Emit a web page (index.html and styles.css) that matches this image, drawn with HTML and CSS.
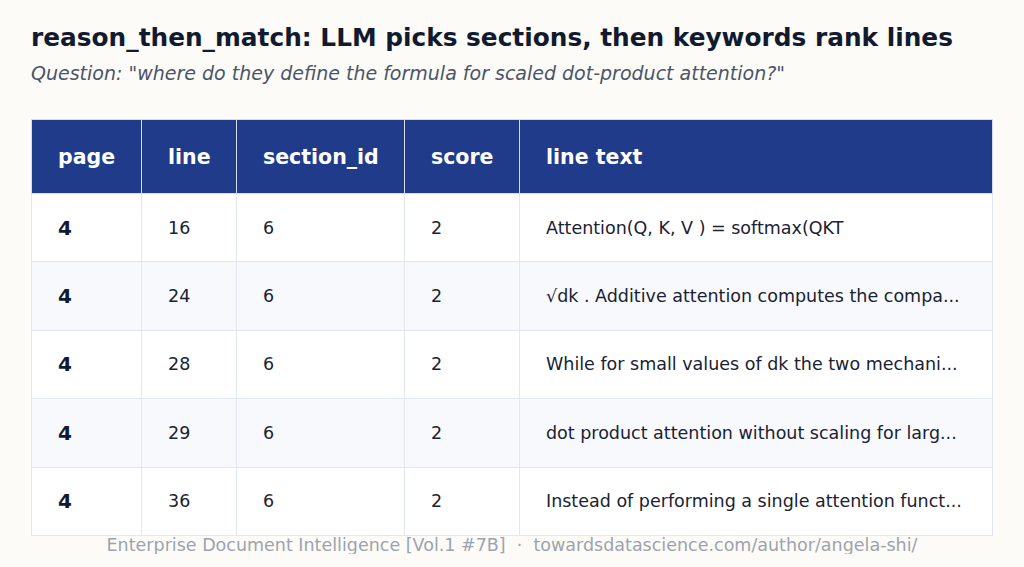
FILE: index.html
```html
<!DOCTYPE html>
<html>
<head>
<meta charset="utf-8">
<link rel="stylesheet" href="styles.css">
</head>
<body>
<div class="page">
  <h1 class="title">reason_then_match: LLM picks sections, then keywords rank lines</h1>
  <p class="subtitle">Question: "where do they define the formula for scaled dot-product attention?"</p>
  <table class="results">
    <colgroup>
      <col class="c-page"><col class="c-line"><col class="c-sec"><col class="c-score"><col class="c-text">
    </colgroup>
    <thead>
      <tr><th>page</th><th>line</th><th>section_id</th><th>score</th><th>line text</th></tr>
    </thead>
    <tbody>
      <tr><td class="pg">4</td><td>16</td><td>6</td><td>2</td><td>Attention(Q, K, V ) = softmax(QKT</td></tr>
      <tr><td class="pg">4</td><td>24</td><td>6</td><td>2</td><td>√dk . Additive attention computes the compa...</td></tr>
      <tr><td class="pg">4</td><td>28</td><td>6</td><td>2</td><td>While for small values of dk the two mechani...</td></tr>
      <tr><td class="pg">4</td><td>29</td><td>6</td><td>2</td><td>dot product attention without scaling for larg...</td></tr>
      <tr><td class="pg">4</td><td>36</td><td>6</td><td>2</td><td>Instead of performing a single attention funct...</td></tr>
    </tbody>
  </table>
  <p class="footer">Enterprise Document Intelligence [Vol.1 #7B] &nbsp;·&nbsp; towardsdatascience.com/author/angela-shi/</p>
</div>
</body>
</html>
```
FILE: styles.css
```css
html, body {
  margin: 0;
  padding: 0;
  background: #fcfbf7;
}
body {
  font-family: "DejaVu Sans", "Liberation Sans", sans-serif;
  color: #111827;
}
.page {
  padding: 22px 31px 0 31px;
}
.title {
  margin: 0;
  font-size: 24.8px;
  font-weight: bold;
  line-height: 32px;
  color: #111a2e;
}
.subtitle {
  margin: 7px 0 0 0;
  font-size: 19px;
  font-style: italic;
  line-height: 24px;
  color: #4a5568;
}
.results {
  margin-top: 34px;
  width: 961px;
  border-collapse: collapse;
  table-layout: fixed;
  background: #ffffff;
}
.c-page { width: 110px; }
.c-line { width: 95px; }
.c-sec { width: 168px; }
.c-score { width: 115px; }
.c-text { width: 473px; }
.results th {
  background: #1f3b8a;
  color: #ffffff;
  font-size: 20.5px;
  font-weight: bold;
  text-align: left;
  height: 73px;
  padding: 0 0 0 26px;
  border: 1px solid #d5dcea;
}
.results td {
  height: 67.4px;
  padding: 0 0 0 26px;
  font-size: 17.5px;
  color: #1a2233;
  border: 1px solid #e3e8f0;
  white-space: nowrap;
  overflow: hidden;
}
.results tbody tr:nth-child(even) td {
  background: #f7f9fc;
}
.results td.pg {
  font-weight: bold;
  font-size: 20px;
  color: #111a2e;
}
.footer {
  margin: 0;
  text-align: center;
  font-size: 17.5px;
  line-height: 18px;
  color: #9ca3af;
}
```
